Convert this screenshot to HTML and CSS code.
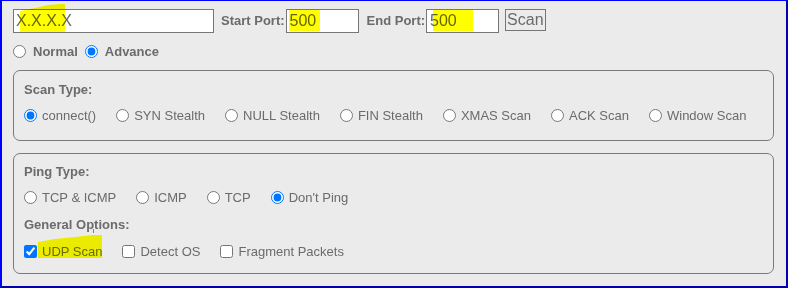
FILE: index.html
```html
<!DOCTYPE html>
<html>
<head>
<meta charset="utf-8">
<link rel="stylesheet" href="styles.css">
</head>
<body>
<div class="frame">
  <div class="top-row">
    <input class="ip" type="text" value="X.X.X.X">
    <label class="field-label first">Start Port:</label>
    <input class="port" type="text" value="500">
    <label class="field-label">End Port:</label>
    <input class="port" type="text" value="500">
    <button class="scan-btn">Scan</button>
  </div>

  <div class="mode-row">
    <label class="mode"><input type="radio" name="mode"> Normal</label>
    <label class="mode"><input type="radio" name="mode" checked> Advance</label>
  </div>

  <div class="group group-scan">
    <div class="group-title">Scan Type:</div>
    <div class="opt-row">
      <label class="opt"><input type="radio" name="scan" checked>connect()</label>
      <label class="opt"><input type="radio" name="scan">SYN Stealth</label>
      <label class="opt"><input type="radio" name="scan">NULL Stealth</label>
      <label class="opt"><input type="radio" name="scan">FIN Stealth</label>
      <label class="opt"><input type="radio" name="scan">XMAS Scan</label>
      <label class="opt"><input type="radio" name="scan">ACK Scan</label>
      <label class="opt"><input type="radio" name="scan">Window Scan</label>
    </div>
  </div>

  <div class="group group-ping">
    <div class="group-title">Ping Type:</div>
    <div class="opt-row">
      <label class="opt"><input type="radio" name="ping">TCP &amp; ICMP</label>
      <label class="opt"><input type="radio" name="ping">ICMP</label>
      <label class="opt"><input type="radio" name="ping">TCP</label>
      <label class="opt"><input type="radio" name="ping" checked>Don't Ping</label>
    </div>
    <div class="group-title second">General Options:</div>
    <div class="opt-row check-row">
      <label class="opt"><input type="checkbox" checked>UDP Scan</label>
      <label class="opt"><input type="checkbox">Detect OS</label>
      <label class="opt"><input type="checkbox">Fragment Packets</label>
    </div>
  </div>

  <svg class="marks" width="788" height="288" viewBox="0 0 788 288">
    <polygon points="20,11 35,8 48,5 60,4 65,4 65,32 20,32" fill="#ffff00"/>
    <polygon points="289,10 320,10 320,31 289,31" fill="#ffff00"/>
    <polygon points="433,10 473,10 473,31 433,31" fill="#ffff00"/>
    <polygon points="38,242 55,239 75,237 92,235 102,235 102,258 38,258" fill="#ffff00"/>
    <line x1="93.5" y1="229" x2="93.5" y2="233" stroke="#8a8a8a" stroke-width="1"/>
  </svg>
</div>
</body>
</html>
```

FILE: styles.css
```css
html, body {
  margin: 0;
  padding: 0;
  background: #ebebeb;
}

.frame {
  position: relative;
  box-sizing: border-box;
  width: 788px;
  height: 288px;
  border-style: solid;
  border-width: 1px 2px 2px 2px;
  border-color: #0000ff #0000b0 #0000b0 #0000ff;
  background: #ebebeb;
  padding: 8px 12px 0 11px;
  font-family: "Liberation Sans", Arial, sans-serif;
  font-size: 13px;
  color: #6b6b6b;
}

.top-row {
  display: flex;
  align-items: flex-start;
  height: 24px;
}

.ip,
.port {
  box-sizing: border-box;
  height: 24px;
  margin: 0;
  padding: 0 2px;
  border: 1px solid #767676;
  background: #ffffff;
  font-family: "Liberation Sans", Arial, sans-serif;
  font-size: 16px;
  color: #666666;
  outline: none;
}

.ip {
  width: 201px;
}

.port {
  width: 73px;
  padding-left: 3px;
}

.field-label {
  font-weight: bold;
  line-height: 24px;
  margin: 0 1px 0 8px;
}

.field-label.first {
  margin-left: 7px;
}

.scan-btn {
  box-sizing: border-box;
  height: 22px;
  margin: 0 0 0 6px;
  padding: 1px 1px;
  border: 1px solid #767676;
  border-radius: 0;
  background: #ebebeb;
  font-family: "Liberation Sans", Arial, sans-serif;
  font-size: 16px;
  line-height: 18px;
  color: #6b6b6b;
}

.mode-row {
  display: flex;
  align-items: center;
  height: 18px;
  margin-top: 9px;
  gap: 7px;
}

.mode {
  display: flex;
  align-items: center;
  gap: 7px;
  font-weight: bold;
}

.mode input {
  margin: 0;
  width: 13px;
  height: 13px;
}

.group {
  box-sizing: border-box;
  border: 1px solid #7a7a7a;
  border-radius: 7px;
  padding: 0 10px;
}

.group-scan {
  margin-top: 10px;
  padding-top: 11px;
  padding-bottom: 15px;
}

.group-ping {
  margin-top: 12px;
  padding-top: 10px;
  padding-bottom: 13px;
}

.group-title {
  font-weight: bold;
  line-height: 16px;
}

.group-title.second {
  margin-top: 11px;
}

.opt-row {
  display: flex;
  align-items: center;
  gap: 20px;
  height: 19px;
  margin-top: 8px;
}

.group-ping .opt-row {
  height: 18px;
}

.check-row {
  margin-top: 9px;
}

.opt {
  display: flex;
  align-items: center;
  gap: 5px;
  white-space: nowrap;
}

.opt input {
  margin: 0;
  width: 13px;
  height: 13px;
}

.marks {
  position: absolute;
  top: -1px;
  left: -2px;
  pointer-events: none;
  mix-blend-mode: multiply;
}
```
